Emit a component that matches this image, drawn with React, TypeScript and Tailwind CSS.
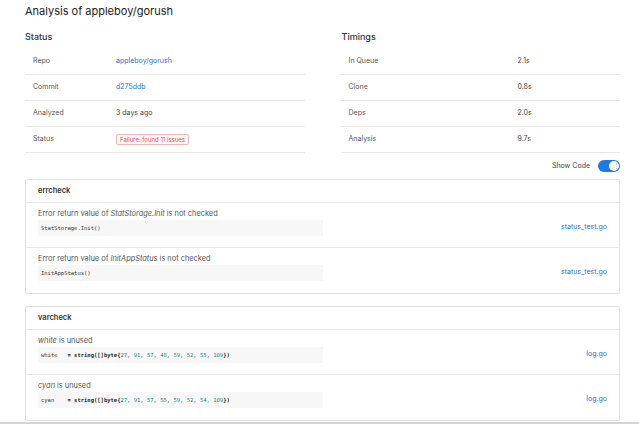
import React from "react";

const statusRows = [
  { label: "Repo", value: "appleboy/gorush", link: true },
  { label: "Commit", value: "d275ddb", link: true },
  { label: "Analyzed", value: "3 days ago" },
  { label: "Status", value: "Failure: found 11 issues", badge: true },
];

const timings = [
  { label: "In Queue", value: "2.1s" },
  { label: "Clone", value: "0.8s" },
  { label: "Deps", value: "2.0s" },
  { label: "Analysis", value: "9.7s" },
];

const mono = "font-['DejaVu_Sans_Mono','Liberation_Mono',monospace]";

function ByteLine({ name, nums }: { name: string; nums: number[] }) {
  return (
    <>
      <span>{name.padEnd(8, " ")}</span>
      <span className="font-bold text-[#222]">= string([]byte{"{"}</span>
      {nums.map((n, i) => (
        <span key={i}>
          <span className="text-[#0f8a8a]">{n}</span>
          {i < nums.length - 1 ? ", " : ""}
        </span>
      ))}
      <span className="font-bold text-[#222]">{"})"}</span>
    </>
  );
}

const cards = [
  {
    title: "errcheck",
    issues: [
      {
        text: (
          <>
            Error return value of <i>StatStorage.Init</i> is not checked
          </>
        ),
        code: <>StatStorage.Init()</>,
        file: "status_test.go",
      },
      {
        text: (
          <>
            Error return value of <i>InitAppStatus</i> is not checked
          </>
        ),
        code: <>InitAppStatus()</>,
        file: "status_test.go",
      },
    ],
  },
  {
    title: "varcheck",
    issues: [
      {
        text: (
          <>
            <i>white</i> is unused
          </>
        ),
        code: <ByteLine name="white" nums={[27, 91, 57, 48, 59, 52, 55, 109]} />,
        file: "log.go",
      },
      {
        text: (
          <>
            <i>cyan</i> is unused
          </>
        ),
        code: <ByteLine name="cyan" nums={[27, 91, 57, 55, 59, 52, 54, 109]} />,
        file: "log.go",
      },
    ],
  },
];

export default function App() {
  return (
    <div className="w-[639px] h-[425px] overflow-hidden bg-white font-['Inter',sans-serif] text-[#333] flex flex-col">
      <div className="pl-[25px] pr-[19px] flex-1">
        <h1 className="text-[11px] leading-none pt-[6px] h-[24px] text-[#222]">Analysis of appleboy/gorush</h1>

        <div className="grid grid-cols-2 gap-x-[36px]">
          <div>
            <h2 className="text-[9px] font-medium h-[25px] flex items-center text-[#333]">Status</h2>
            {statusRows.map((r) => (
              <div key={r.label} className="h-[26px] flex items-center border-b border-[#e8e8e8] text-[7px]">
                <span className="w-[91px] pl-[8px] text-[#555]">{r.label}</span>
                {r.link ? (
                  <span className="text-[#2b6fd6]">{r.value}</span>
                ) : r.badge ? (
                  <span className="text-[6px] text-[#d9534f] border border-[#f3b6b6] bg-[#fff6f6] rounded-[2px] px-[3px] py-[1.5px] leading-none">
                    {r.value}
                  </span>
                ) : (
                  <span className="text-[#444]">{r.value}</span>
                )}
              </div>
            ))}
          </div>
          <div>
            <h2 className="text-[9px] font-medium h-[25px] flex items-center pl-px text-[#333]">Timings</h2>
            {timings.map((r) => (
              <div key={r.label} className="h-[26px] flex items-center border-b border-[#e8e8e8] text-[7px]">
                <span className="w-[177px] pl-[8px] text-[#555]">{r.label}</span>
                <span className="text-[#444]">{r.value}</span>
              </div>
            ))}
          </div>
        </div>

        <div className="h-[26px] flex items-center justify-end gap-[8px]">
          <span className="text-[7px] text-[#444]">Show Code</span>
          <div className="w-[22px] h-[12px] rounded-full bg-[#1f7ae8] flex items-center justify-end pr-[1px]">
            <div className="w-[10px] h-[10px] rounded-full bg-white" />
          </div>
        </div>

        <div className="flex flex-col gap-[12px]">
          {cards.map((c) => (
            <div key={c.title} className="border border-[#e2e2e2] rounded-[2px]">
              <div className="h-[23px] flex items-center px-[12px] border-b border-[#e8e8e8] text-[7.5px] font-semibold text-[#333]">
                {c.title}
              </div>
              {c.issues.map((iss, i) => (
                <div
                  key={i}
                  className={`h-[45px] flex items-start justify-between px-[12px] pt-[6px] ${i === 0 ? "border-b border-[#e8e8e8]" : ""}`}
                >
                  <div className="w-[285px]">
                    <div className="text-[7.4px] leading-[10px] text-[#555]">{iss.text}</div>
                    <div className={`mt-[1px] h-[16px] bg-[#f7f7f7] flex items-center pl-[3px] text-[5.5px] whitespace-pre text-[#333] ${mono}`}>
                      {iss.code}
                    </div>
                  </div>
                  <span className="text-[7px] text-[#2b6fd6] mt-[13px]">{iss.file}</span>
                </div>
              ))}
            </div>
          ))}
        </div>
      </div>
      <div className="h-[2px] bg-[#d4d4d4] mb-[1px]" />
    </div>
  );
}
